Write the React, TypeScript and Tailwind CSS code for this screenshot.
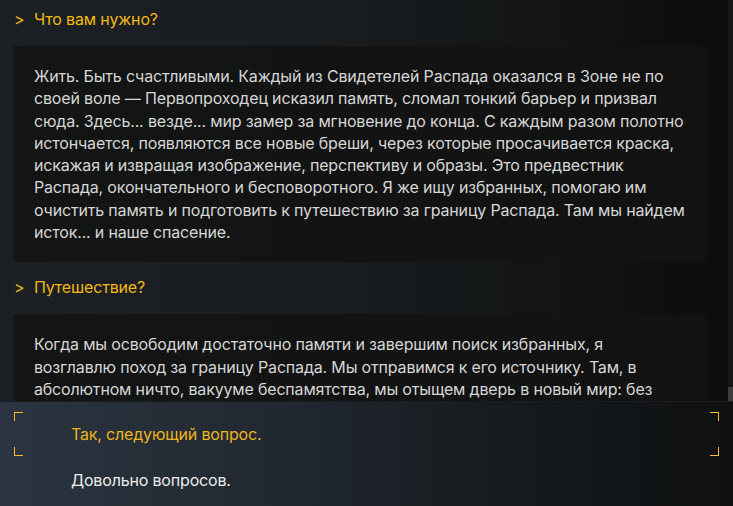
const answers = [
  {
    q: 'Что вам нужно?',
    a: 'Жить. Быть счастливыми. Каждый из Свидетелей Распада оказался в Зоне не по своей воле — Первопроходец исказил память, сломал тонкий барьер и призвал сюда. Здесь... везде... мир замер за мгновение до конца. С каждым разом полотно истончается, появляются все новые бреши, через которые просачивается краска, искажая и извращая изображение, перспективу и образы. Это предвестник Распада, окончательного и бесповоротного. Я же ищу избранных, помогаю им очистить память и подготовить к путешествию за границу Распада. Там мы найдем исток... и наше спасение.',
  },
  {
    q: 'Путешествие?',
    a: 'Когда мы освободим достаточно памяти и завершим поиск избранных, я возглавлю поход за границу Распада. Мы отправимся к его источнику. Там, в абсолютном ничто, вакууме беспамятства, мы отыщем дверь в новый мир: без боли, без страха, без потерь. Мир, который мы построим сами.',
  },
]

function Corner({ pos }: { pos: 'tl' | 'bl' | 'tr' | 'br' }) {
  const cls = {
    tl: 'top-0 left-0 border-t border-l',
    bl: 'bottom-0 left-0 border-b border-l',
    tr: 'top-0 right-0 border-t border-r',
    br: 'bottom-0 right-0 border-b border-r',
  }[pos]
  return <span className={`absolute w-[9px] h-[9px] border-[#ffbb2c] ${cls}`} />
}

export default function App() {
  return (
    <div
      className="w-[733px] h-[506px] flex flex-col overflow-hidden text-[16px] tracking-[-0.17px]"
      style={{ fontFamily: "Inter, 'Noto Sans', sans-serif" }}
    >
      {/* dialogue history */}
      <div className="h-[401px] flex bg-[linear-gradient(90deg,#1b2025_0%,#191d20_45%,#121415_75%,#0b0c0c_100%)]">
        <div className="flex-1 overflow-hidden pl-[14px] pr-[21px]">
          {answers.map((item, i) => (
            <div key={i}>
              <div
                className={`flex items-center leading-[24px] text-[#f2b815] ${
                  i === 0 ? 'pt-[7px] pb-[15px]' : 'pt-[13px] pb-[15px]'
                }`}
              >
                <span className="w-[20px]">&gt;</span>
                <span>{item.q}</span>
              </div>
              <div className="bg-[#131313]/90 pl-[20px] pr-[22px] py-[19px] leading-[22.3px] text-[#d6d6d6]">
                {item.a}
              </div>
            </div>
          ))}
        </div>
        {/* scrollbar */}
        <div className="w-[5px] bg-[#151617] flex flex-col justify-end">
          <div className="h-[14px] bg-[#3c3d3e]" />
        </div>
      </div>

      {/* answer options */}
      <div className="flex-1 flex flex-col gap-[2px] px-[14px] pt-[10px] bg-[linear-gradient(90deg,#2b3440_0%,#222932_35%,#181c20_65%,#0e1011_100%)] border-t border-[#191d22]">
        <div className="relative h-[44px] flex items-center pl-[57px] text-[#eeb51c]">
          <Corner pos="tl" />
          <Corner pos="bl" />
          <Corner pos="tr" />
          <Corner pos="br" />
          <span>Так, следующий вопрос.</span>
        </div>
        <div className="h-[44px] flex items-center pl-[57px] text-[#ececec]">Довольно вопросов.</div>
      </div>
    </div>
  )
}
